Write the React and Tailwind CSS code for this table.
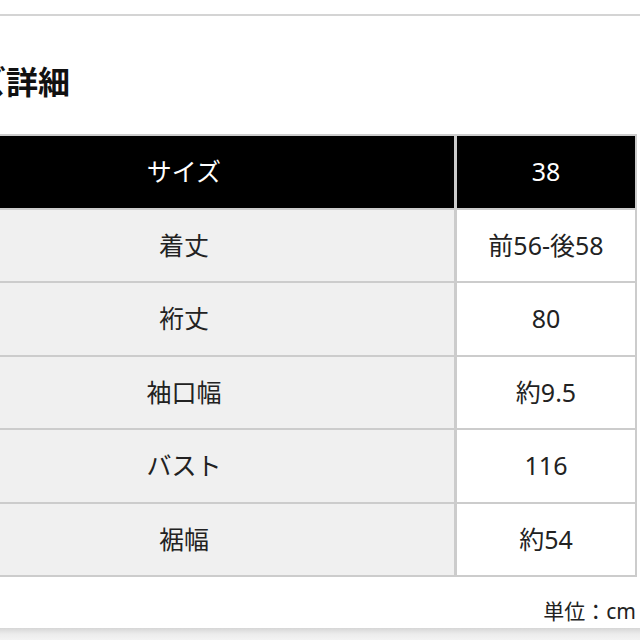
import React from "react";

const rows = [
  ["着丈", "前56-後58"],
  ["裄丈", "80"],
  ["袖口幅", "約9.5"],
  ["バスト", "116"],
  ["裾幅", "約54"],
];

export default function App() {
  return (
    <div
      className="w-[640px] h-[640px] overflow-hidden bg-white flex flex-col text-[#222]"
      style={{ fontFamily: '"Noto Sans", "Noto Sans CJK JP", sans-serif' }}
    >
      <div className="h-[14px] shrink-0" />
      <div className="h-[2px] bg-[#d4d4d4] shrink-0" />
      <h2 className="ml-[-89px] mt-[50px] mb-[36px] text-[32px] leading-none font-bold text-[#111] whitespace-nowrap shrink-0">
        サイズ詳細
      </h2>
      <div className="ml-[-86px] w-[723px] border-t-2 border-r-2 border-[#cccccc] shrink-0">
        <div className="flex h-[73.5px] border-b-2 border-[#cccccc] bg-black text-white text-[25px]">
          <div className="w-[540px] flex items-center justify-center">サイズ</div>
          <div className="flex-1 border-l-[3px] border-[#cccccc] flex items-center justify-center">38</div>
        </div>
        {rows.map(([k, v]) => (
          <div key={k} className="flex h-[73.5px] border-b-2 border-[#cccccc] text-[25px]">
            <div className="w-[540px] bg-[#f0f0f0] flex items-center justify-center">{k}</div>
            <div className="flex-1 bg-white border-l-[3px] border-[#cccccc] flex items-center justify-center">{v}</div>
          </div>
        ))}
      </div>
      <div className="mt-[24px] pr-[4px] text-right text-[21px] leading-[21px] shrink-0">単位：cm</div>
      <div className="mt-[6px] flex-1 bg-gradient-to-b from-[#d6d6d6] via-[#ececec] to-[#f3f3f3]" />
    </div>
  );
}
